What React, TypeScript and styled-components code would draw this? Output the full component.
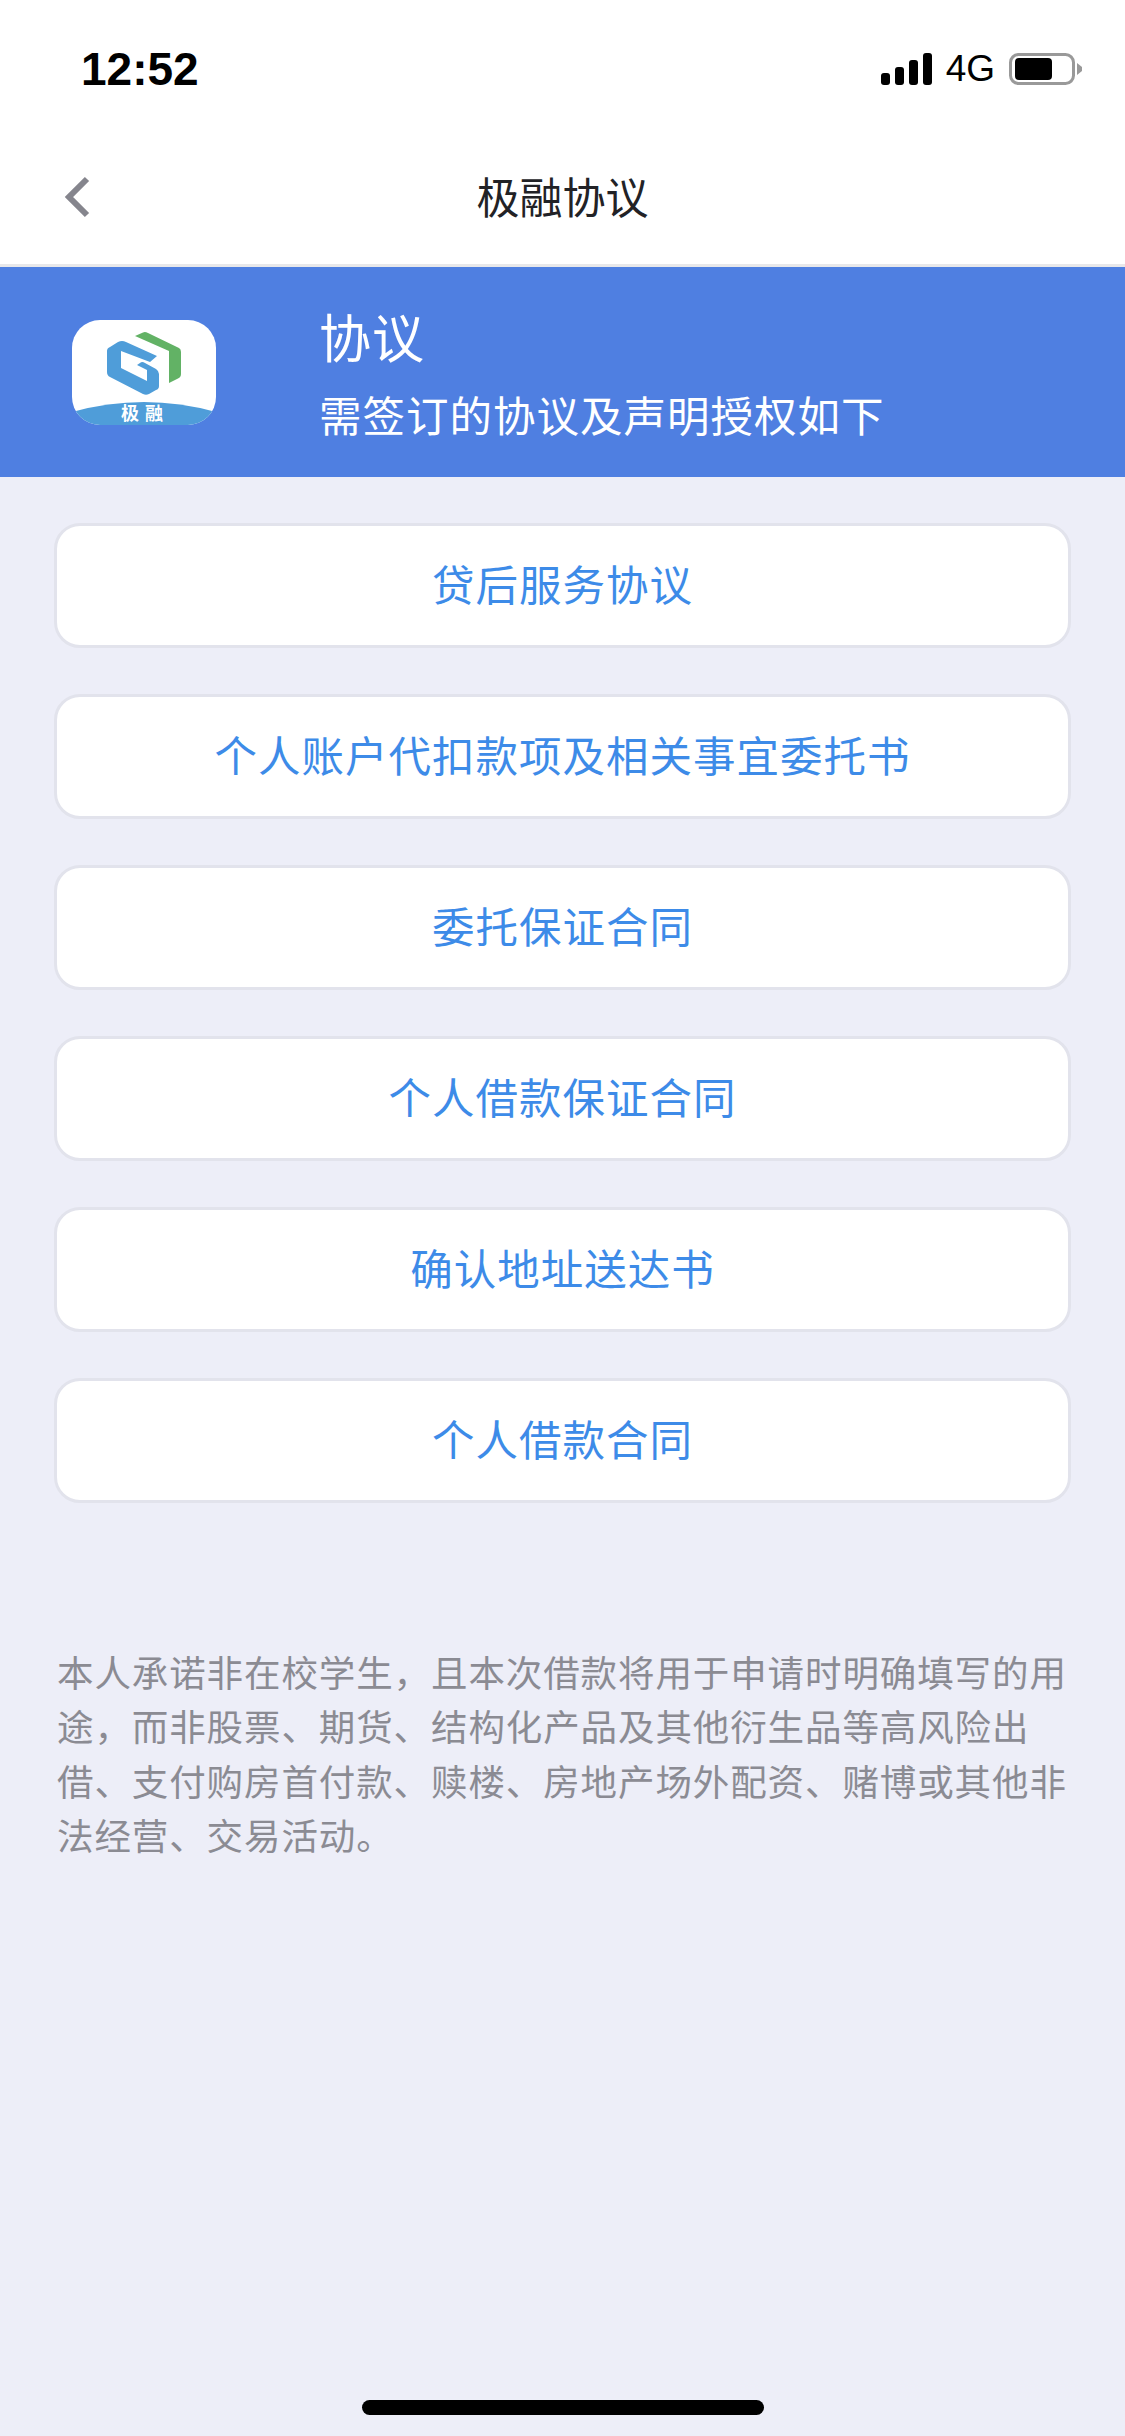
import React from 'react'
import styled, { createGlobalStyle } from 'styled-components'

const GlobalStyle = createGlobalStyle`
  html, body { margin: 0; padding: 0; background: #edeef8; }
  body { font-family: "Liberation Sans", "Noto Sans CJK SC", sans-serif; }
`

const Screen = styled.div`
  width: 1125px;
  height: 2436px;
  display: flex;
  flex-direction: column;
  position: relative;
  overflow: hidden;
  background: #edeef8;
`

const StatusBar = styled.div`
  height: 132px;
  box-sizing: border-box;
  padding: 6px 43px 0 81px;
  display: flex;
  justify-content: space-between;
  align-items: center;
  background: #fff;
`

const Clock = styled.span`
  font-size: 46px;
  font-weight: 700;
  color: #000;
`

const StatusRight = styled.div`
  display: flex;
  align-items: center;
  gap: 14px;
`

const Network = styled.span`
  font-size: 37px;
  color: #000;
`

const NavBar = styled.div`
  height: 135px;
  padding-bottom: 6px;
  box-sizing: border-box;
  display: flex;
  align-items: center;
  justify-content: center;
  position: relative;
  background: #fff;
  border-bottom: 3px solid #e8e8ea;
`

const BackButton = styled.svg`
  position: absolute;
  left: 64px;
  top: 44px;
`

const NavTitle = styled.h1`
  margin: 0;
  font-size: 43px;
  font-weight: 400;
  color: #222226;
`

const Banner = styled.div`
  height: 210px;
  display: flex;
  align-items: center;
  padding-left: 72px;
  background: #4f7fe1;
  color: #fff;
`

const BannerText = styled.div`
  margin-left: 103px;
  padding-top: 10px;
  display: flex;
  flex-direction: column;
  gap: 18px;
`

const BannerTitle = styled.div`
  font-size: 52px;
  line-height: 64px;
  letter-spacing: 1px;
`

const BannerSub = styled.div`
  font-size: 42.5px;
  line-height: 56px;
  letter-spacing: 1px;
`

const AgreementList = styled.div`
  padding: 46px 54px 0;
  display: flex;
  flex-direction: column;
  gap: 46px;
`

const AgreementButton = styled.button`
  height: 125px;
  padding: 0 0 6px;
  box-sizing: border-box;
  border: 3px solid #e2e3ec;
  border-radius: 26px;
  background: #fff;
  color: #3d8be8;
  font-family: inherit;
  font-size: 42.5px;
  letter-spacing: 1px;
`

const Notice = styled.p`
  margin: 145px 54px 0 57px;
  font-size: 36.5px;
  line-height: 54.4px;
  letter-spacing: 0.9px;
  color: #8b8b93;
`

const HomeBar = styled.div`
  position: absolute;
  left: 362px;
  bottom: 21px;
  width: 402px;
  height: 15px;
  border-radius: 8px;
  background: #000;
`

const LogoWrap = styled.div`
  position: relative;
  width: 144px;
  height: 105px;
`

const LogoLabel = styled.span`
  position: absolute;
  left: 2px;
  right: 0;
  top: 82px;
  text-align: center;
  font-size: 18px;
  line-height: 24px;
  font-weight: 700;
  letter-spacing: 6px;
  color: #fff;
`

const agreements = [
  '贷后服务协议',
  '个人账户代扣款项及相关事宜委托书',
  '委托保证合同',
  '个人借款保证合同',
  '确认地址送达书',
  '个人借款合同',
]

function SignalIcon() {
  return (
    <svg width="51" height="32" viewBox="0 0 51 32">
      <rect x="0" y="20" width="9" height="12" rx="3" fill="#000" />
      <rect x="14" y="14" width="9" height="18" rx="3" fill="#000" />
      <rect x="28" y="7" width="9" height="25" rx="3" fill="#000" />
      <rect x="42" y="0" width="9" height="32" rx="3" fill="#000" />
    </svg>
  )
}

function BatteryIcon() {
  return (
    <svg width="73" height="32" viewBox="0 0 73 32">
      <rect x="1.5" y="1.5" width="63" height="29" rx="8" fill="none" stroke="#999" strokeWidth="3" />
      <rect x="6" y="5" width="37" height="22" rx="4" fill="#000" />
      <path d="M68 10 L73 14 V18 L68 22 Z" fill="#999" />
    </svg>
  )
}

function AppLogo() {
  return (
    <svg width="144" height="105" viewBox="0 0 144 105">
      <defs>
        <clipPath id="logo-clip">
          <rect width="144" height="105" rx="28" />
        </clipPath>
      </defs>
      <g clipPath="url(#logo-clip)">
        <rect width="144" height="105" fill="#fff" />
        <path d="M0 92 Q72 72 144 92 V105 H0 Z" fill="#4f9dd9" />
      </g>
      <path
        d="M63 16 L71 12.5 Q73 11.5 76 13 L107 28 Q109 29 109 32 V54 Q109 57 106 58.5 L97 63 V31 Z"
        fill="#62b265"
      />
      <path
        d="M35 31 Q35 28 38 27 L46 22 Q50 20 54 22 L85 36 L78 42 L49 31 V48 L75 61 V50 L65 45 L68 43 Q70 41 73 43 L84 49 Q87 51 87 54 V66 Q87 69 84 70 L77 74 Q74 75.5 71 74 L38 57 Q35 55.5 35 52 Z"
        fill="#4f9dd9"
      />
    </svg>
  )
}

export default function App() {
  return (
    <Screen>
      <GlobalStyle />
      <StatusBar>
        <Clock>12:52</Clock>
        <StatusRight>
          <SignalIcon />
          <Network>4G</Network>
          <BatteryIcon />
        </StatusRight>
      </StatusBar>
      <NavBar>
        <BackButton width="26" height="42" viewBox="0 0 26 42">
          <path d="M23 3 L5 21 L23 39" fill="none" stroke="#85858d" strokeWidth="6" />
        </BackButton>
        <NavTitle>极融协议</NavTitle>
      </NavBar>
      <Banner>
        <LogoWrap>
          <AppLogo />
          <LogoLabel>极融</LogoLabel>
        </LogoWrap>
        <BannerText>
          <BannerTitle>协议</BannerTitle>
          <BannerSub>需签订的协议及声明授权如下</BannerSub>
        </BannerText>
      </Banner>
      <AgreementList>
        {agreements.map((name) => (
          <AgreementButton key={name}>{name}</AgreementButton>
        ))}
      </AgreementList>
      <Notice>
        本人承诺非在校学生，且本次借款将用于申请时明确填写的用途，而非股票、期货、结构化产品及其他衍生品等高风险出借、支付购房首付款、赎楼、房地产场外配资、赌博或其他非法经营、交易活动。
      </Notice>
      <HomeBar />
    </Screen>
  )
}
